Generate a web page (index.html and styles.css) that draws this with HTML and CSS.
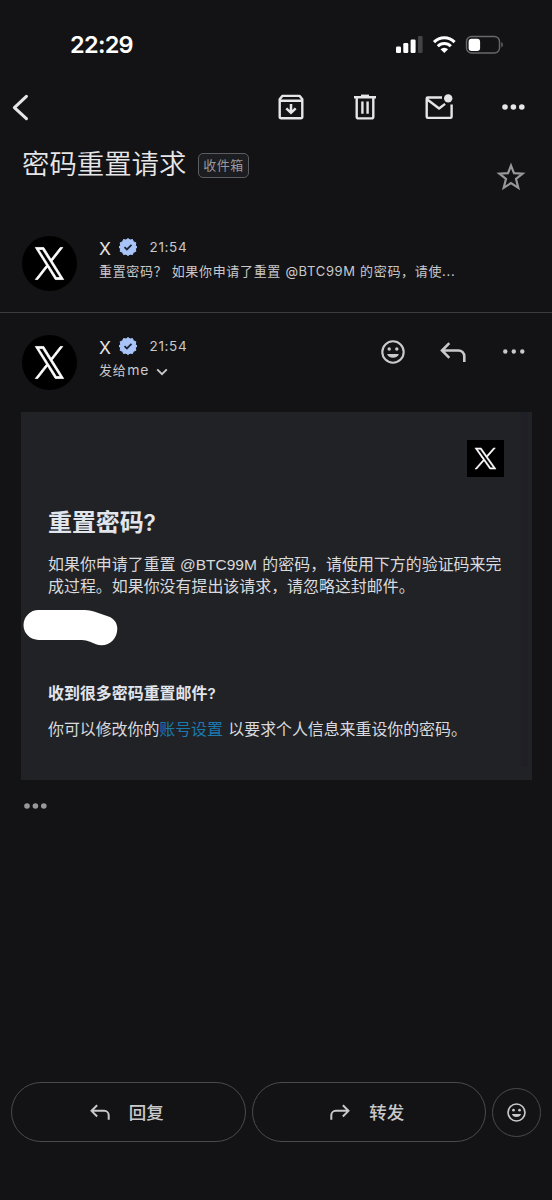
FILE: index.html
```html
<!DOCTYPE html>
<html lang="zh-CN">
<head>
<meta charset="utf-8">
<title>密码重置请求</title>
<link rel="stylesheet" href="styles.css">
</head>
<body>
<svg class="defs" width="0" height="0" aria-hidden="true">
  <symbol id="x-logo" viewBox="0 0 24 24"><path fill="currentColor" stroke="currentColor" stroke-width="0.55" d="M14.095 10.317 22.286 1h-1.94l-7.115 8.088L7.551 1H1l8.59 12.231L1 23h1.94l7.51-8.543L16.45 23H23zm-2.658 3.022-.872-1.218L3.64 2.432h2.981l5.59 7.82.868 1.218 7.265 10.166h-2.981z"/></symbol>
  <symbol id="x-tall" viewBox="0 0 24 24" preserveAspectRatio="none"><path fill="currentColor" stroke="currentColor" stroke-width="0.55" d="M14.095 10.317 22.286 1h-1.94l-7.115 8.088L7.551 1H1l8.59 12.231L1 23h1.94l7.51-8.543L16.45 23H23zm-2.658 3.022-.872-1.218L3.64 2.432h2.981l5.59 7.82.868 1.218 7.265 10.166h-2.981z"/></symbol>
  <symbol id="smile" viewBox="0 0 24 24"><circle cx="12" cy="12" r="10.7" fill="none" stroke="currentColor" stroke-width="2.1"/><circle cx="8.2" cy="9" r="1.7" fill="currentColor"/><circle cx="15.8" cy="9" r="1.7" fill="currentColor"/><path fill="currentColor" d="M6.2 14h11.6a6 5 0 0 1-11.6 0z"/></symbol>
  <symbol id="reply" viewBox="0 0 26 20"><path fill="none" stroke="currentColor" stroke-width="2.6" d="M9.3 1.2 2 8.5l7.3 7.3M2 8.5h16.5a5.8 5.8 0 0 1 5.8 5.8V20"/></symbol>
  <symbol id="verified" viewBox="0 0 18 18"><path fill="#a8c4f8" stroke="#a8c4f8" stroke-width="1" stroke-linejoin="round" d="M9 .5l2 1.6 2.5-.6.9 2.3 2.4.9-.4 2.5L18 9l-1.6 2 .4 2.4-2.4.9-.9 2.3-2.5-.5-2 1.5-2-1.5-2.5.5-.9-2.3-2.4-.9.4-2.4L0 9l1.6-1.8-.4-2.5 2.4-.9.9-2.3 2.5.6z"/><path fill="none" stroke="#1c2636" stroke-width="1.8" d="M5.5 9.1l2.4 2.3 4.6-4.6"/></symbol>
  <symbol id="dots" viewBox="0 0 24 6"><circle cx="3" cy="3" r="2.8"/><circle cx="11.4" cy="3" r="2.8"/><circle cx="19.8" cy="3" r="2.8"/></symbol>
</svg>

<header class="status">
  <span class="clock">22:29</span>
  <svg class="signals" width="108" height="20" viewBox="0 0 108 20">
    <g fill="#fff"><rect x="0" y="11.5" width="5" height="6.5" rx="1.3"/><rect x="7.3" y="8" width="5" height="10" rx="1.3"/><rect x="14.6" y="4.5" width="5" height="13.5" rx="1.3"/></g>
    <rect x="22" y="1" width="4.6" height="17" rx="1.3" fill="#434345"/>
    <g fill="none" stroke="#fff" stroke-width="3"><path d="M38 7.1a14.6 14.6 0 0 1 20.6 0"/><path d="M41.8 11.2a9.2 9.2 0 0 1 13 0"/></g>
    <path fill="#fff" d="M44.5 14.2a5.4 5.4 0 0 1 7.6 0L48.3 18z"/>
    <rect x="70.5" y="1.5" width="33" height="16.5" rx="5" fill="none" stroke="#68686a" stroke-width="1.4"/>
    <rect x="72.6" y="3.7" width="11.5" height="12.3" rx="3" fill="#fff"/>
    <path fill="#68686a" d="M105.3 7v5.5c2-.8 2-4.7 0-5.5z"/>
  </svg>
</header>

<nav class="toolbar">
  <svg class="back" width="18" height="28" viewBox="0 0 18 28"><path fill="none" stroke="currentColor" stroke-width="3.1" stroke-linecap="round" stroke-linejoin="round" d="M14.4 3.3 2.4 14.6l12 11"/></svg>
  <div class="tools">
    <svg width="26" height="26" viewBox="0 0 26 26"><path fill="none" stroke="currentColor" stroke-width="2.4" stroke-linejoin="round" d="M1.7 5.2v17.6q0 1.5 1.5 1.5h19.6q1.5 0 1.5-1.5V5.2L21.7 1.9H4.3zM1.7 6.8h22.6"/><path fill="none" stroke="currentColor" stroke-width="2.5" d="M13 10v8M8.3 14.3 13 18.8l4.7-4.5"/></svg>
    <svg class="trash" width="22" height="26" viewBox="0 0 22 26"><path fill="none" stroke="currentColor" stroke-width="2.4" d="M0 3.3h22M2.7 3.3v19.5q0 1.6 1.6 1.6h13.4q1.6 0 1.6-1.6V3.3M8.4 7.5v12.3M13.6 7.5v12.3"/><path fill="currentColor" d="M7 .6h8v2H7z"/></svg>
    <svg width="28" height="26" viewBox="0 0 28 26"><path fill="none" stroke="currentColor" stroke-width="2.4" stroke-linejoin="round" d="M17 3.5H2.7q-1 0-1 1v18.2q0 1.2 1.2 1.2h22.5q1.2 0 1.2-1.2V10.5M2 5.3l12.1 9.2 6-4.6"/><circle cx="23.2" cy="4.4" r="4.2" fill="currentColor"/></svg>
    <svg width="24" height="6" fill="currentColor"><use href="#dots"/></svg>
  </div>
</nav>

<section class="subject">
  <h1>密码重置请求</h1>
  <span class="tag">收件箱</span>
  <svg class="star" width="28" height="28" viewBox="0 0 28 28"><path fill="none" stroke="currentColor" stroke-width="2.2" d="M14 2.6l3 7.6 8.6.5-6.6 5.3 2.3 8.8L14 20.1l-7.3 4.7L9 16 2.4 10.7l8.6-.5z"/></svg>
</section>

<article class="message collapsed">
  <div class="avatar"><svg width="31" height="35"><use href="#x-tall"/></svg></div>
  <div class="info">
    <div class="from"><span class="name">X</span><svg width="18" height="18"><use href="#verified"/></svg><time>21:54</time></div>
    <p class="snippet">重置密码？ 如果你申请了重置 <span class="handle">@BTC99M</span> 的密码，请使...</p>
  </div>
</article>

<article class="message">
  <div class="avatar"><svg width="31" height="35"><use href="#x-tall"/></svg></div>
  <div class="info">
    <div class="from"><span class="name">X</span><svg width="18" height="18"><use href="#verified"/></svg><time>21:54</time></div>
    <p class="snippet to">发给<span class="me">me</span><svg width="12" height="8" viewBox="0 0 12 8"><path fill="none" stroke="currentColor" stroke-width="1.9" d="M1.2 1.3 6 6.1l4.8-4.8"/></svg></p>
  </div>
  <div class="actions">
    <svg width="24" height="24"><use href="#smile"/></svg>
    <svg width="26" height="20"><use href="#reply"/></svg>
    <svg width="22" height="5" viewBox="0 0 22 5" fill="currentColor"><circle cx="2.3" cy="2.5" r="2.2"/><circle cx="10.8" cy="2.5" r="2.2"/><circle cx="19.3" cy="2.5" r="2.2"/></svg>
  </div>
</article>

<main class="card">
  <div class="brand"><svg width="23" height="23"><use href="#x-logo"/></svg></div>
  <h2>重置密码<span class="mark">?</span></h2>
  <p class="body">如果你申请了重置 <span class="account">@BTC99M</span> 的密码，请使用下方的验证码来完<br>成过程。如果你没有提出该请求，请忽略这封邮件。</p>
  <svg class="mask" width="96" height="38" viewBox="0 0 96 38"><path fill="#fff" d="M15.5 1H62q5 0 9 1.6l14.5 5c5.5 2 8.8 6.4 8.8 12.2 0 9-6.8 16.5-15.8 16.5q-3 0-5.5-1l-6-2.6Q63 31 59 31H15.5a15 15 0 0 1 0-30z"/></svg>
  <h3>收到很多密码重置邮件<span class="mark">?</span></h3>
  <p class="body">你可以修改你的<a>账号设置</a> 以要求个人信息来重设你的密码。</p>
</main>

<svg class="more" width="24" height="6" fill="currentColor"><use href="#dots"/></svg>

<footer class="bar">
  <div class="pill"><svg width="20" height="16"><use href="#reply"/></svg><span>回复</span></div>
  <div class="pill"><svg class="flip" width="20" height="16"><use href="#reply"/></svg><span>转发</span></div>
  <div class="round"><svg width="19" height="19"><use href="#smile"/></svg></div>
</footer>
</body>
</html>
```
FILE: styles.css
```css
* { box-sizing: border-box; }
body {
  margin: 0;
  height: 1200px;
  overflow: hidden;
  display: flex;
  flex-direction: column;
  background: #131315;
  color: #c9c9cb;
  font-family: Inter, "Noto Sans CJK SC", sans-serif;
}
h1, h2, h3, p { margin: 0; }
svg { display: block; flex: none; overflow: visible; }
.defs { position: absolute; }

.status {
  display: flex;
  justify-content: space-between;
  align-items: flex-start;
  height: 80px;
  padding: 35px 48px 0 70px;
}
.clock { color: #fff; font-size: 23.5px; font-weight: 600; line-height: 20px; letter-spacing: -0.7px; }

.toolbar {
  display: flex;
  justify-content: space-between;
  align-items: center;
  height: 54px;
  padding: 0 26px 0 12px;
  color: #e6e6e8;
}
.tools { display: flex; align-items: center; gap: 49.3px; }
.trash { margin: 0 -1px 0 1px; }

.subject { display: flex; height: 92px; padding: 12px 27px 0 22px; }
.subject h1 {
  font-size: 27.4px;
  font-weight: 350;
  line-height: 36px;
  color: #e6e6e8;
}
.tag {
  height: 25px;
  margin: 7px 0 0 11.5px;
  padding: 0 4.5px;
  border: 1.5px solid #5c5d61;
  border-radius: 5px;
  font-size: 13px;
  line-height: 22px;
  letter-spacing: 0.5px;
  color: #98999d;
  background: #1c1d20;
}
.star { margin: 17px 0 0 auto; color: #98989a; }

.message { display: flex; height: 86px; padding: 9px 28px 0 22px; }
.collapsed { height: 87px; margin-bottom: 13px; border-bottom: 1.5px solid #3b3c3e; padding-top: 10px; }
.avatar {
  display: flex;
  align-items: center;
  justify-content: center;
  width: 55px;
  height: 55px;
  border-radius: 50%;
  background: #000;
  color: #fff;
}
.info { margin-left: 22px; white-space: nowrap; }
.from { display: flex; align-items: center; height: 22px; }
.name { width: 20px; padding-top: 4px; font-size: 17.5px; font-weight: 400; line-height: 20px; color: #e2e2e4; }
.from time { margin-left: 12.5px; font-size: 13.5px; letter-spacing: 0.65px; }
.snippet { font-size: 13px; line-height: 20px; letter-spacing: 0.67px; padding-top: 3px; }
.to { display: flex; align-items: center; }
.me { margin: 0 7px 0 1px; font-size: 14px; }
.to svg { margin-top: 4px; }
.actions { display: flex; align-items: center; gap: 36.5px; height: 33px; margin: 0 -0.5px 0 auto; }
.actions svg:first-child { margin-right: -1px; }

.card {
  width: 511px;
  height: 368px;
  margin-left: 20.5px;
  padding: 28px 27.5px 0;
  background: linear-gradient(#201f28, #201f28) 500px 0 / 7px 355px no-repeat, #212226;
  color: #d9dadd;
}
.brand {
  display: flex;
  align-items: center;
  justify-content: center;
  width: 37px;
  height: 37px;
  margin-left: auto;
  background: #000;
  color: #fff;
}
.brand svg { stroke-width: 1; }
.card h2 { margin-top: 30px; font-size: 24px; font-weight: 700; line-height: 32px; letter-spacing: -0.1px; color: #e1e5ec; }
.card h3 { margin-top: 36px; font-size: 15.95px; font-weight: 700; line-height: 22px; color: #e1e5ec; }
.mark { font-weight: 600; font-size: 0.94em; }
.body { margin-top: 14px; font-size: 15.95px; line-height: 22px; white-space: nowrap; }
h2 + .body { margin-top: 15px; }
.body a { margin-right: 1px; color: #1b79ae; }
.account { margin-right: 1px; font-family: "Liberation Sans", sans-serif; font-size: 15.5px; }
h3 + .body { letter-spacing: -0.04px; }
.mask { margin: 11px 0 0 -25px; }

.more { margin: 23px 0 0 24px; color: #98989a; }

.bar {
  display: flex;
  align-items: center;
  gap: 6px;
  margin-top: auto;
  padding: 0 11px 58px;
}
.pill {
  display: flex;
  align-items: center;
  justify-content: center;
  gap: 19px;
  width: 234.5px;
  height: 60px;
  padding-right: 3px;
  border: 1px solid #4a4a4c;
  border-radius: 30px;
  font-size: 17.5px;
  font-weight: 500;
}
.pill span { margin-top: -1px; }
.flip { transform: scaleX(-1); }
.round {
  display: flex;
  align-items: center;
  justify-content: center;
  width: 49px;
  height: 49px;
  border: 1px solid #4a4a4c;
  border-radius: 50%;
}
```
